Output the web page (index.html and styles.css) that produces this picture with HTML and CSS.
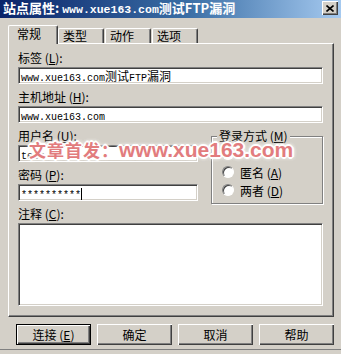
FILE: index.html
```html
<!DOCTYPE html>
<html lang="zh-CN">
<head>
    <meta charset="UTF-8">
    <title>站点属性</title>
    <link rel="stylesheet" href="styles.css">
</head>
<body>

    <div class="window">
        <div class="titlebar">
            <div class="title">站点属性: <span class="title-mono">www.xue163.com</span>测试FTP漏洞</div>
            <div class="close-btn">
                <svg width="8" height="7" viewBox="0 0 8 7">
                    <path d="M0.5 0.5 L7.5 6.5 M7.5 0.5 L0.5 6.5" stroke="#000" stroke-width="1.6" fill="none"/>
                </svg>
            </div>
        </div>

        <div class="tabs">
            <div class="tab active">常规</div>
            <div class="tab">类型</div>
            <div class="tab">动作</div>
            <div class="tab">选项</div>
        </div>

        <div class="panel">
            <div class="field-label">标签 (<u>L</u>):</div>
            <div class="input"><span class="mono">www.xue163.com</span>测试<span class="mono">FTP</span>漏洞</div>

            <div class="field-label">主机地址 (<u>H</u>):</div>
            <div class="input"><span class="mono">www.xue163.com</span></div>

            <div class="login-row">
                <div class="login-col">
                    <div class="field-label">用户名 (<u>U</u>):</div>
                    <div class="input"><span class="mono">test</span></div>

                    <div class="field-label">密码 (<u>P</u>):</div>
                    <div class="input"><span class="mono">**********</span><span class="caret"></span></div>
                </div>

                <div class="group">
                    <div class="group-title">登录方式 (<u>M</u>)</div>
                    <!-- first option sits under the watermark -->
                    <div class="radio-row"><span class="radio checked"></span></div>
                    <div class="radio-row"><span class="radio"></span>匿名 (<u>A</u>)</div>
                    <div class="radio-row"><span class="radio"></span>两者 (<u>D</u>)</div>
                </div>
            </div>

            <div class="field-label">注释 (<u>C</u>):</div>
            <div class="input textarea"></div>
        </div>

        <div class="buttons">
            <div class="btn default">连接 (<u>E</u>)</div>
            <div class="btn">确定</div>
            <div class="btn">取消</div>
            <div class="btn">帮助</div>
        </div>

        <!-- site watermark stamped over the screenshot -->
        <div class="watermark"><span class="wm-cn">文章首发：</span>www.xue163.com</div>
    </div>

</body>
</html>
```

FILE: styles.css
```css
body {
    margin: 0;
    padding: 0;
    background: #d4d0c8;
    font-family: "Noto Sans CJK SC", sans-serif;
    font-size: 12px;
    color: #000;
}

.window {
    position: relative;
    width: 341px;
    height: 349px;
    background: #d4d0c8;
    border-bottom: 1px solid #808080;
    box-shadow: 0 2px 0 #404040;
    overflow: hidden;
}

.titlebar {
    height: 18px;
    display: flex;
    align-items: center;
    justify-content: space-between;
    padding: 0 3px;
    background: linear-gradient(to right, #0a246a, #3a6ea5 55%, #a6caf0);
}

.title {
    color: #fff;
    font-weight: bold;
    font-size: 13px;
    line-height: 16px;
    white-space: nowrap;
}

.title-mono {
    font-family: "Liberation Mono", monospace;
    font-size: 11.5px;
}

.close-btn {
    width: 16px;
    height: 14px;
    margin-bottom: 2px;
    box-sizing: border-box;
    background: #d4d0c8;
    display: flex;
    align-items: center;
    justify-content: center;
    box-shadow: inset 1px 1px #fff, inset -1px -1px #404040, inset -2px -2px #808080;
}

.tabs {
    display: flex;
    align-items: flex-end;
    height: 18px;
    padding: 7px 0 0 8px;
}

.tab {
    position: relative;
    width: 46px;
    height: 15px;
    box-sizing: border-box;
    padding-left: 4px;
    line-height: 14px;
    border-top: 1px solid #fff;
    border-left: 1px solid #fff;
    border-right: 1px solid #404040;
    border-radius: 2px 2px 0 0;
    box-shadow: inset -1px 0 #808080;
    background: #d4d0c8;
}

.tab + .tab {
    margin-left: 1px;
}

.tab.active {
    width: 50px;
    height: 19px;
    padding-left: 8px;
    line-height: 16px;
    margin-bottom: -1px;
    z-index: 1;
}

.tab.active + .tab {
    margin-left: 0;
}

.panel {
    width: 326px;
    height: 274px;
    box-sizing: border-box;
    margin-left: 8px;
    padding: 5px 10px 0 9px;
    border-top: 1px solid #fff;
    border-left: 1px solid #fff;
    border-right: 1px solid #404040;
    border-bottom: 1px solid #404040;
    box-shadow: inset -1px -1px #808080;
}

.field-label {
    height: 18px;
    line-height: 18px;
    white-space: nowrap;
}

.input {
    height: 17px;
    box-sizing: border-box;
    margin-bottom: 4px;
    padding: 0 2px;
    background: #fff;
    border-top: 1px solid #808080;
    border-left: 1px solid #808080;
    border-right: 1px solid #fff;
    border-bottom: 1px solid #fff;
    box-shadow: inset 1px 1px #404040, inset -1px -1px #d4d0c8;
    line-height: 15px;
    white-space: nowrap;
    overflow: hidden;
}

.mono {
    font-family: "Liberation Mono", monospace;
    font-size: 10px;
}

.caret {
    display: inline-block;
    width: 1px;
    height: 12px;
    background: #000;
    vertical-align: -2px;
}

.login-row {
    display: grid;
    grid-template-columns: 180px 112px;
    column-gap: 13px;
    align-items: start;
}

.group {
    position: relative;
    height: 68px;
    box-sizing: border-box;
    margin-top: 9px;
    padding: 8px 0 0 10px;
    border: 1px solid #808080;
    box-shadow: inset 1px 1px #fff, 1px 1px #fff;
}

.group-title {
    position: absolute;
    left: 5px;
    top: -8px;
    padding: 0 2px;
    line-height: 14px;
    background: #d4d0c8;
    white-space: nowrap;
}

.radio-row {
    display: flex;
    align-items: center;
    height: 18px;
    white-space: nowrap;
}

.radio {
    width: 12px;
    height: 12px;
    box-sizing: border-box;
    margin-right: 6px;
    border-radius: 50%;
    background: #fff;
    border: 1px solid;
    border-color: #808080 #fff #fff #808080;
    box-shadow: inset 1px 1px #404040;
    position: relative;
}

.radio.checked::after {
    content: "";
    position: absolute;
    left: 3px;
    top: 3px;
    width: 4px;
    height: 4px;
    border-radius: 50%;
    background: #000;
}

.textarea {
    height: 83px;
}

.buttons {
    display: flex;
    gap: 6px;
    padding: 7px 0 0 16px;
}

.btn {
    width: 75px;
    height: 21px;
    box-sizing: border-box;
    text-align: center;
    line-height: 21px;
    background: #d4d0c8;
    box-shadow: inset 1px 1px #fff, inset -1px -1px #404040, inset -2px -2px #808080;
}

.btn.default {
    border: 1px solid #000;
    line-height: 19px;
}

.watermark {
    position: absolute;
    left: 27px;
    top: 138px;
    padding: 0 2px;
    font-family: "Liberation Sans", sans-serif;
    font-weight: bold;
    font-size: 21px;
    line-height: 24px;
    color: #e27c7e;
    white-space: nowrap;
    text-shadow: 2px 0 #fff, -2px 0 #fff, 0 2px #fff, 0 -2px #fff,
                 1px 1px #fff, -1px -1px #fff, 1px -1px #fff, -1px 1px #fff,
                 0 0 5px #fff, 0 0 5px #fff, 0 0 5px #fff;
}

.wm-cn {
    font-family: "Noto Sans CJK SC", sans-serif;
    font-size: 17px;
    letter-spacing: 1px;
}
```
